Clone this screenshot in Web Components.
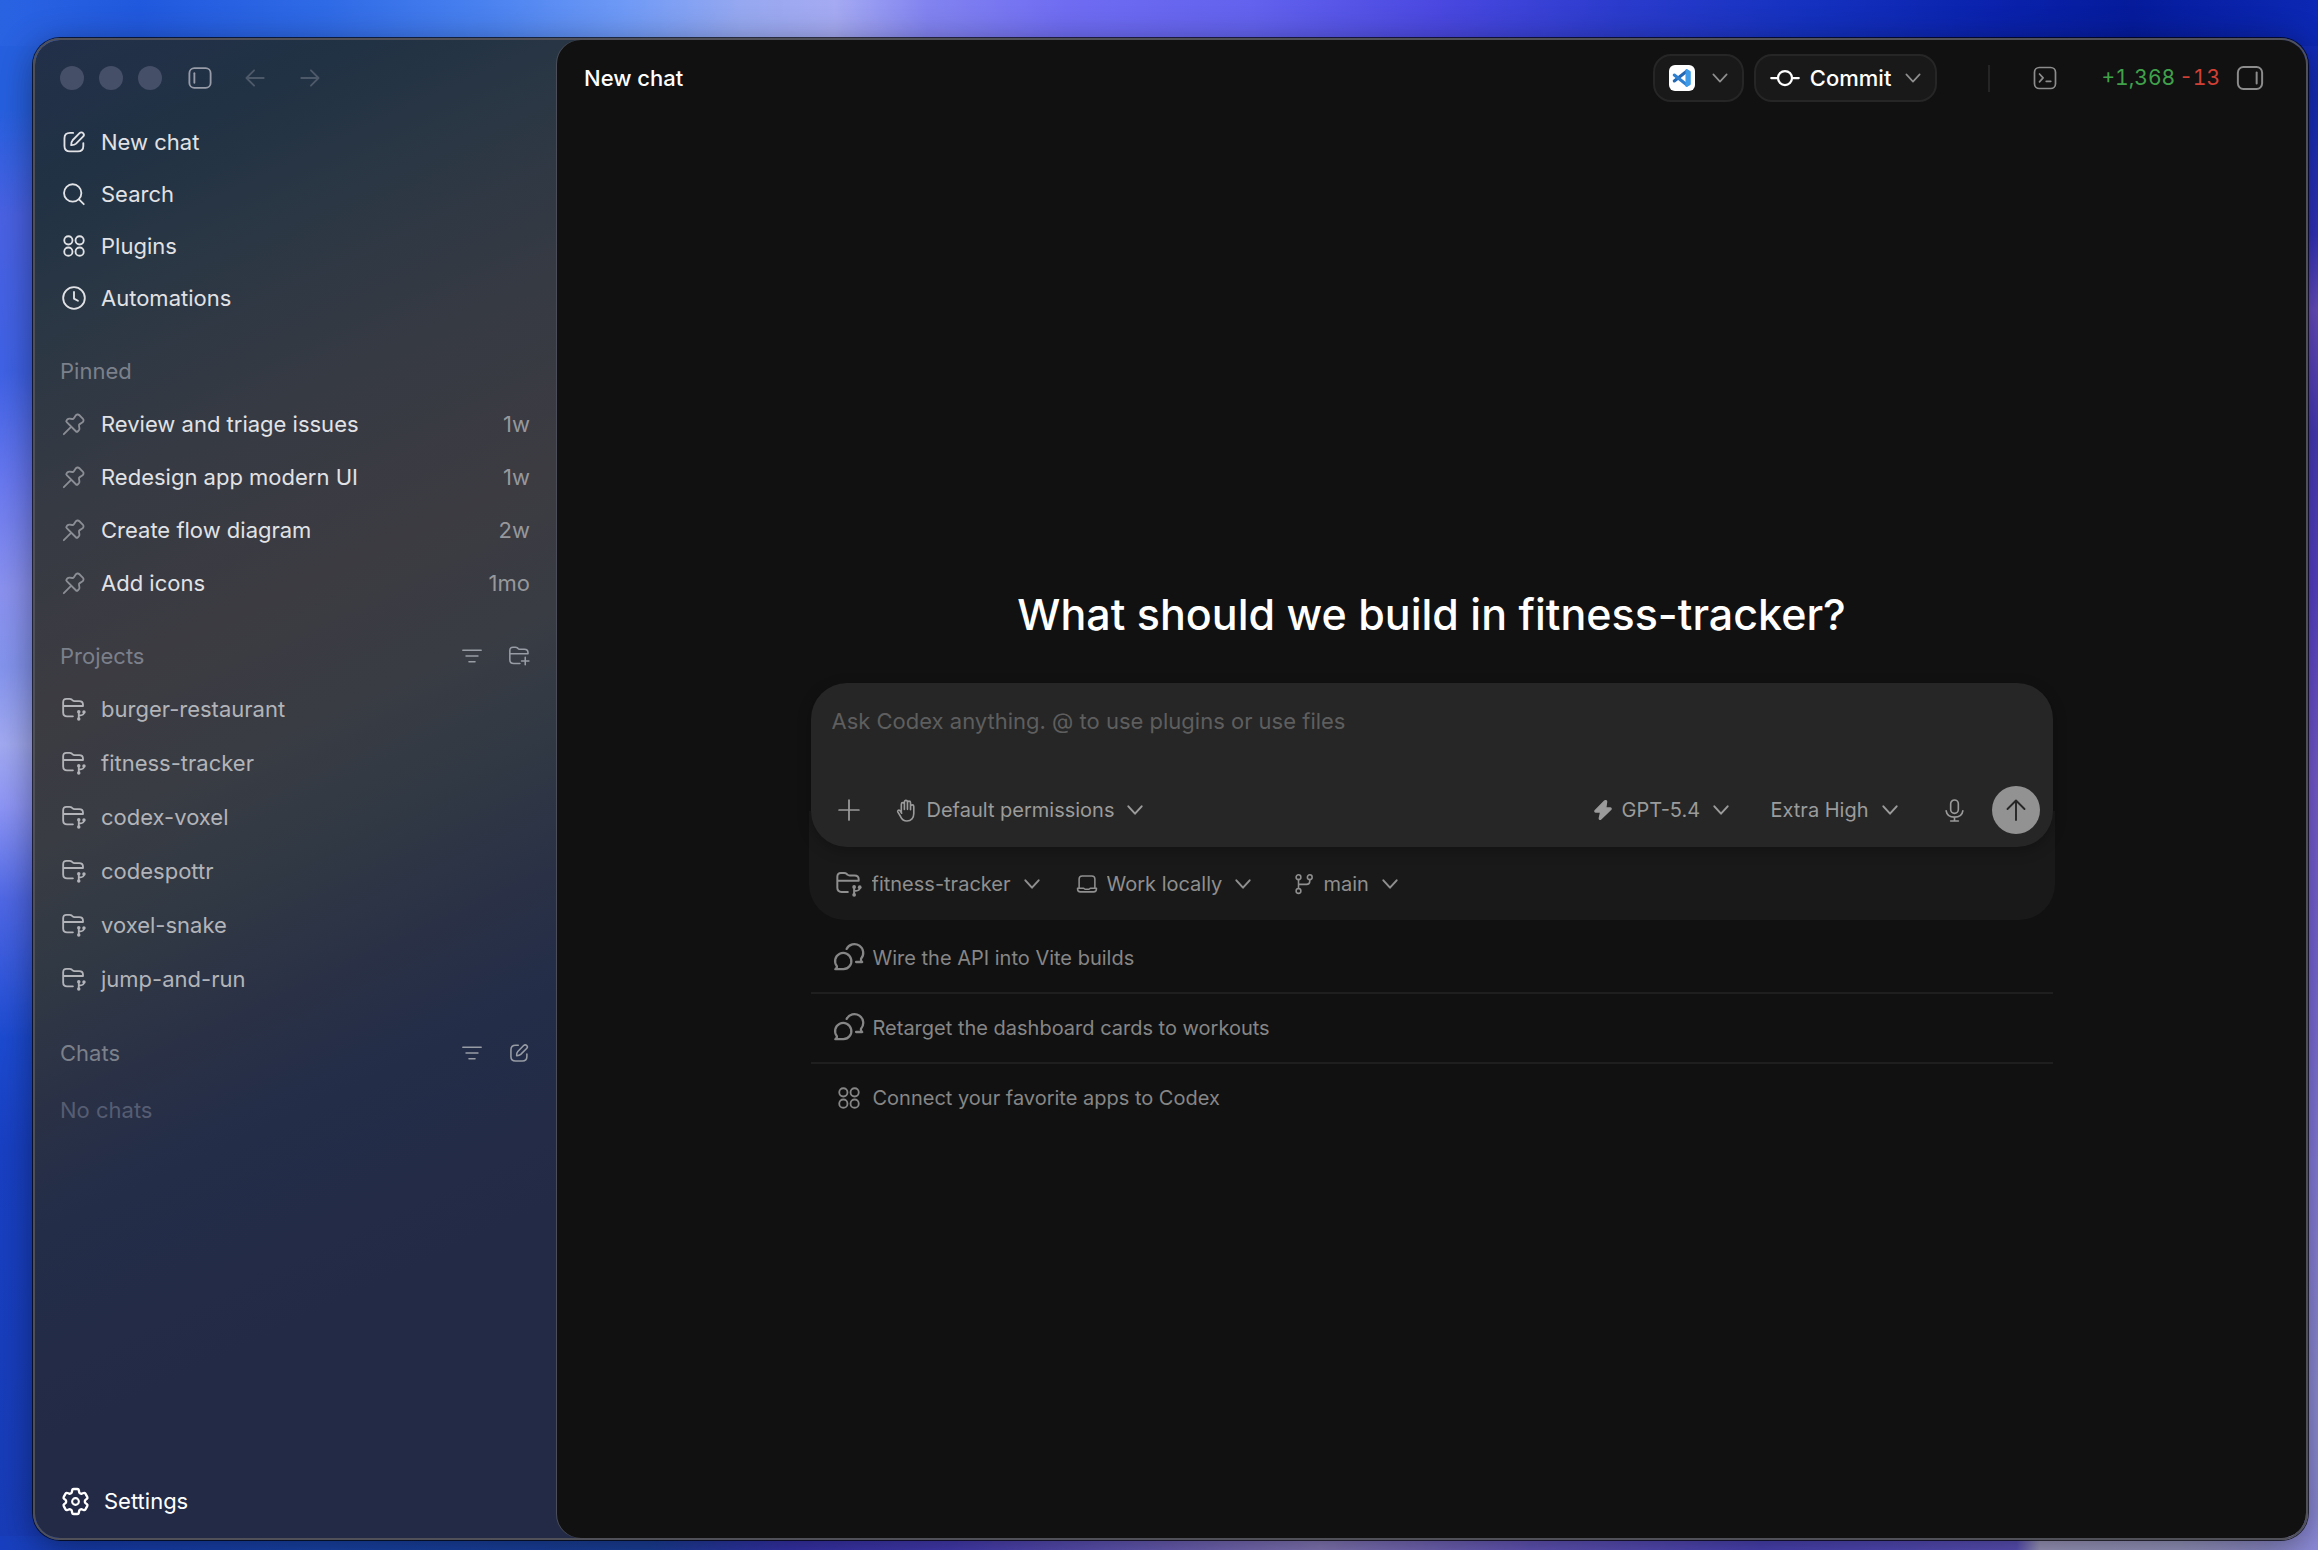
<!DOCTYPE html>
<html lang="en">
<head>
<meta charset="utf-8">
<meta name="viewport" content="width=device-width, initial-scale=1">
<title>New chat</title>
<style>
    html {
        height: 100%;
    }

    body {
        margin: 0;
        min-height: 100vh;
        display: flex;
        box-sizing: border-box;
        padding: 38px 10px 10px 33px;
        font-family: Inter, "Liberation Sans", sans-serif;
        font-size: 22px;
        line-height: 28px;
        color: #e1e2e5;
        /* wallpaper: one strip for each side that shows round the window */
        background:
            linear-gradient(90deg, #2a63e2 0%, #2159de 6%, #2f6ae6 14%, #4a82f0 21%, #6f9af6 27%, #96a8f0 32%, #a5aaf2 36%, #8283f0 40%, #6f6cf2 46%, #6262ee 54%, #4a48e0 62%, #2a3bcc 70%, #1431bf 78%, #0a22ad 86%, #051b9c 92%, #0c28b4 100%) 0 0 / 100% 46px no-repeat,
            linear-gradient(90deg, #183fbf 0%, #1a48b4 14%, #1c43a4 28%, #3a36b8 34%, #4a40c0 41%, #7064c4 50%, #8f82c6 57%, #6a5cc8 66%, #5048c4 76%, #6258c8 87%, #a8a4cc 88%, #a0a0cc 94%, #8e8cdc 100%) 0 100% / 100% 14px no-repeat,
            linear-gradient(180deg, #2660e0 0%, #2660e0 7%, #4a62e4 14%, #3f62e6 24%, #6878f0 31%, #8b92f0 38%, #8494ee 43%, #a2aaf2 48%, #8e96f6 52%, #5068e6 58%, #3358dc 63%, #1c4bd2 67%, #1840c4 74%, #183cb8 100%) 0 0 / 50% 100% no-repeat,
            linear-gradient(180deg, #0c28b4 0%, #1a30c0 8%, #3434c4 15%, #6a50c8 20%, #4a3cc0 28%, #5a44d0 38%, #7a5ed8 50%, #7c6ae0 62%, #8a80e4 75%, #9290dc 90%, #8e8cdc 100%) 100% 0 / 50% 100% no-repeat;
    }
</style>
</head>
<body>

<app-window>
    <side-bar slot="sidebar">
        <nav-item icon="compose">New chat</nav-item>
        <nav-item icon="search">Search</nav-item>
        <nav-item icon="apps">Plugins</nav-item>
        <nav-item icon="clock">Automations</nav-item>

        <nav-section heading="Pinned">
            <nav-item class="pinned" icon="pin" note="1w">Review and triage issues</nav-item>
            <nav-item class="pinned" icon="pin" note="1w">Redesign app modern UI</nav-item>
            <nav-item class="pinned" icon="pin" note="2w">Create flow diagram</nav-item>
            <nav-item class="pinned" icon="pin" note="1mo">Add icons</nav-item>
        </nav-section>

        <nav-section heading="Projects">
            <icon-button slot="actions" icon="filter" label="Filter projects"></icon-button>
            <icon-button slot="actions" icon="folder-plus" label="Add project"></icon-button>
            <nav-item class="project" icon="folder-branch">burger-restaurant</nav-item>
            <nav-item class="project" icon="folder-branch">fitness-tracker</nav-item>
            <nav-item class="project" icon="folder-branch">codex-voxel</nav-item>
            <nav-item class="project" icon="folder-branch">codespottr</nav-item>
            <nav-item class="project" icon="folder-branch">voxel-snake</nav-item>
            <nav-item class="project" icon="folder-branch">jump-and-run</nav-item>
        </nav-section>

        <nav-section heading="Chats">
            <icon-button slot="actions" icon="filter" label="Filter chats"></icon-button>
            <icon-button slot="actions" icon="compose" label="New chat"></icon-button>
            <p class="empty">No chats</p>
        </nav-section>

        <nav-item slot="footer" class="settings" icon="gear">Settings</nav-item>
    </side-bar>

    <chat-header slot="header">New chat</chat-header>
    <chat-home heading="What should we build in fitness-tracker?">
        <chat-composer></chat-composer>
        <suggestion-item icon="chats">Wire the API into Vite builds</suggestion-item>
        <suggestion-item icon="chats">Retarget the dashboard cards to workouts</suggestion-item>
        <suggestion-item icon="apps">Connect your favorite apps to Codex</suggestion-item>
    </chat-home>
</app-window>

<script>
const ICONS = {
    "compose": `
        <path d="M11.2 3.6H8.4C5 3.6 3.2 5.3 3.2 8.5v7.2c0 3.2 1.8 5 5 5h7.4c3.2 0 5-1.8 5-5V13"/>
        <path d="M9.4 14.9c-.1-2 .2-3.3 1.3-4.5l6.4-6.5c1-1 2.4-1 3.3-.1s.9 2.3-.1 3.3l-6.4 6.4c-1.2 1.1-2.5 1.5-4.5 1.4z"/>`,
    "search": `<circle cx="10.8" cy="11" r="8"/><path d="M16.6 17l4.4 4.4"/>`,
    "apps": `
        <circle cx="6.8" cy="6.8" r="3.8"/><circle cx="17.2" cy="6.8" r="3.8"/>
        <circle cx="6.8" cy="17.2" r="3.8"/><circle cx="17.2" cy="17.2" r="3.8"/>`,
    "clock": `<circle cx="12" cy="12" r="10"/><path d="M12 6.5v6.1l3.6 2"/>`,
    "pin": `<path d="M13.4 4.4c.9-1.4 2.5-1.6 3.6-.5l3.1 3.1c1.1 1.1.9 2.7-.5 3.6l-2.3 1.5c-.6.4-.8.9-.7 1.5l.4 2.4c.1.8-.1 1.4-.6 1.9l-.8.8c-.6.6-1.3.6-1.9 0l-8.4-8.4c-.6-.6-.6-1.3 0-1.9l.8-.8c.5-.5 1.1-.7 1.9-.6l2.4.4c.6.1 1.1-.1 1.5-.7zM9.3 14.7l-6.7 6.7"/>`,
    "folder-branch": `
        <path d="M11 18.8H5.6C3.3 18.8 2 17.5 2 15.3V5.8c0-2 1.1-3.2 3-3.2h2.9c.8 0 1.4.2 2 .7l.8.7c.5.5 1.1.7 1.8.7h4.3c2.3 0 3.5 1.2 3.5 3.3v1.2H2"/>
        <path d="M16.4 14.8v6M21.2 15.3c0 2-1 2.6-4.6 2.7"/>
        <g fill="currentColor" stroke="none"><circle cx="16.4" cy="14.5" r="1.6"/><circle cx="21.2" cy="14.7" r="1.6"/><circle cx="16.4" cy="21.3" r="1.6"/></g>`,
    "folder-plus": `
        <path d="M13 20.2H6.3c-2.7 0-4.3-1.5-4.3-4.1V5.9C2 3.7 3.3 2.4 5.5 2.4h2.6c.9 0 1.6.3 2.2.8l.8.7c.6.5 1.2.8 2 .8h4.7c2.5 0 4 1.3 4 3.7v1.2H2M18.8 13.5v8M14.8 17.5h8"/>`,
    "filter": `<path d="M2 5.8h20M5.5 12h13M8.7 18.2h6.6"/>`,
    "gear": `
        <path d="M9.594 3.94c.09-.542.56-.94 1.11-.94h2.593c.55 0 1.02.398 1.11.94l.213 1.281c.063.374.313.686.645.87.074.04.147.083.22.127.325.196.72.257 1.075.124l1.217-.456a1.125 1.125 0 0 1 1.37.49l1.296 2.247a1.125 1.125 0 0 1-.26 1.431l-1.003.827c-.293.241-.438.613-.43.992a7.723 7.723 0 0 1 0 .255c-.008.378.137.75.43.991l1.004.827c.424.35.534.955.26 1.43l-1.298 2.247a1.125 1.125 0 0 1-1.369.491l-1.217-.456c-.355-.133-.75-.072-1.076.124a6.47 6.47 0 0 1-.22.128c-.331.183-.581.495-.644.869l-.213 1.281c-.09.543-.56.94-1.11.94h-2.594c-.55 0-1.019-.398-1.11-.94l-.213-1.281c-.062-.374-.312-.686-.644-.87a6.52 6.52 0 0 1-.22-.127c-.325-.196-.72-.257-1.076-.124l-1.217.456a1.125 1.125 0 0 1-1.369-.49l-1.297-2.247a1.125 1.125 0 0 1 .26-1.431l1.004-.827c.292-.24.437-.613.43-.991a6.932 6.932 0 0 1 0-.255c.007-.38-.138-.751-.43-.992l-1.004-.827a1.125 1.125 0 0 1-.26-1.43l1.297-2.247a1.125 1.125 0 0 1 1.37-.491l1.216.456c.356.133.751.072 1.076-.124.072-.044.146-.086.22-.128.332-.183.582-.495.644-.869l.214-1.28z" transform="translate(-1.8 -1.8) scale(1.15)"/>
        <circle cx="12" cy="12" r="2.8"/>`,
    "panel-left": `<rect x="2.2" y="2.9" width="19.6" height="18.2" rx="4.6"/><path d="M6.8 7.6v8.8"/>`,
    "panel-right": `<rect x="1.6" y="2.6" width="20.8" height="18.8" rx="4.8"/><path d="M17.7 7.2v9.6"/>`,
    "arrow-left": `<path d="M21.5 12H3M11 3.6L2.7 12l8.3 8.4"/>`,
    "arrow-right": `<path d="M2.5 12H21M13 3.6l8.3 8.4-8.3 8.4"/>`,
    "arrow-up": `<path d="M12 22V2.5M3.5 11L12 2.5l8.5 8.5"/>`,
    "chevron": `<path d="M2 6.5l10 11 10-11"/>`,
    "commit": `<circle cx="12" cy="12" r="5.6"/><path d="M1 12h5.4M17.6 12H23"/>`,
    "terminal": `<rect x="1.5" y="1.5" width="21" height="21" rx="4.8"/><path d="M6.5 8l3.6 3.9-3.6 3.9M13.2 15.3h4.6"/>`,
    "plus": `<path d="M12 1.2v21.6M1.2 12h21.6"/>`,
    "hand": `<path d="M6.6 13.5V5.4a1.6 1.6 0 0 1 3.2 0V11M9.8 10.5V3a1.6 1.6 0 0 1 3.2 0v7.5M13 10.8V3.8a1.6 1.6 0 0 1 3.2 0v7.4M16.2 7.8a1.7 1.7 0 0 1 3.4 0v7.4c0 4.7-2.7 7.7-7.2 7.7-3.3 0-5.2-1.6-6.6-4.6L2.9 13.5c-.6-1.4.9-2.6 2.2-1.5l1.9 2.8"/>`,
    "bolt": `<path d="M13.9 1.2L2.7 12.6c-.8.8-.4 1.9.7 1.9h5.8l-1.6 7.4c-.2 1.2 1 1.7 1.8.9L21.3 11.4c.8-.8.4-1.9-.7-1.9h-5.3l1-7.4c.2-1.2-1.5-1.8-2.4-.9z" fill="currentColor"/>`,
    "mic": `<rect x="8" y="1" width="8" height="14" rx="4"/><path d="M3.3 12.3c.6 4 3.9 6.6 8.7 6.6s8.1-2.6 8.7-6.6M12 19v3.8M8 22.9h8"/>`,
    "laptop": `
        <path d="M3.4 16.3V6.6c0-2.2 1.2-3.4 3.4-3.4h10.4c2.2 0 3.4 1.2 3.4 3.4v9.7"/>
        <path d="M1.7 16.6h6.5c.8 0 1 1.1 1.9 1.1h3.8c.9 0 1.1-1.1 1.9-1.1h6.5v.8c0 2.2-1 3.2-3.1 3.2H4.8c-2.1 0-3.1-1-3.1-3.2z"/>`,
    "branch": `
        <circle cx="6" cy="4.6" r="2.6"/><circle cx="18.3" cy="4.6" r="2.6"/><circle cx="6" cy="19.6" r="2.6"/>
        <path d="M6 7.2V17M18.3 7.2v1.7c0 2.5-1.2 3.5-3.6 3.5H6"/>`,
    "chats": `
        <path d="M2.9 18.1A6.1 6.1 0 1 1 7.8 20.4H1.7c1.2-.6 1.4-1.3 1.2-2.3z"/>
        <path d="M10.2 5.2A6.6 6.6 0 1 1 21 12.6c-.3.9 0 1.6.9 2.4h-4.6"/>`,
    "vscode": `
        <rect width="24" height="24" rx="5.5" fill="#fff" stroke="none"/>
        <path d="M4.9 14.7L16.6 5.6" stroke="#2468b4" stroke-width="2.9"/>
        <path d="M4.9 9.3l11.7 9.1" stroke="#2f7fd0" stroke-width="2.9"/>
        <path d="M15.2 4.3c.3-.5.9-.6 1.4-.4l2.7 1.3c.5.2.8.7.8 1.2v11.2c0 .5-.3 1-.8 1.2l-2.7 1.3c-.5.2-1.1.1-1.4-.4z" fill="#3d9ae8" stroke="none"/>`,
};

class UiIcon extends HTMLElement {
    constructor() {
        super();
        this.attachShadow({ mode: "open" });
    }

    connectedCallback() {
        const name = this.getAttribute("name");
        this.shadowRoot.innerHTML = `
            <style>
                :host {
                    display: block;
                    flex: none;
                    width: var(--icon-size, 26px);
                    height: var(--icon-size, 26px);
                }

                svg {
                    display: block;
                    width: 100%;
                    height: 100%;
                    overflow: visible;
                }
            </style>
            <svg viewBox="0 0 24 24" fill="none" stroke="currentColor" stroke-width="${this.getAttribute("weight") || 1.7}" stroke-linecap="round" stroke-linejoin="round" aria-hidden="true">${ICONS[name] || ""}</svg>
        `;
    }
}

customElements.define("ui-icon", UiIcon);

class IconButton extends HTMLElement {
    constructor() {
        super();
        this.attachShadow({ mode: "open" });
    }

    connectedCallback() {
        this.shadowRoot.innerHTML = `
            <style>
                :host {
                    display: block;
                    flex: none;
                }

                button {
                    display: block;
                    padding: 0;
                    border: none;
                    background: none;
                    color: inherit;
                    cursor: pointer;
                }
            </style>
            <button type="button" aria-label="${this.getAttribute("label")}">
                <ui-icon name="${this.getAttribute("icon")}" weight="${this.getAttribute("weight") || 1.7}"></ui-icon>
            </button>
        `;
    }
}

customElements.define("icon-button", IconButton);

const appWindowTemplate = document.createElement("template");
appWindowTemplate.innerHTML = `
<style>
    :host {
        flex: 1;
        min-width: 0;
        display: flex;
        overflow: hidden;
        border: 2px solid #505158;
        border-radius: 27px;
        background: linear-gradient(155deg, #222f49 0%, #213244 9%, #2b3744 17%, #363a43 27%, #3c3b42 38%, #393c43 46%, #313944 53%, #2a3146 61%, #232d48 68%, #232a46 80%, #232a45 100%) 0 0 / 560px 100% no-repeat padding-box;
        box-shadow: 0 0 0 1px rgba(0, 0, 0, 0.7), 0 8px 36px rgba(0, 0, 0, 0.45);
    }

    aside {
        flex: none;
        width: 522px;
        display: flex;
    }

    main {
        flex: 1;
        min-width: 0;
        display: flex;
        flex-direction: column;
        background: #111;
        border-radius: 24px 0 0 24px;
        box-shadow: -1px 0 0 #4b4e59;
    }
</style>

<aside><slot name="sidebar"></slot></aside>
<main>
    <slot name="header"></slot>
    <slot></slot>
</main>
`;

class AppWindow extends HTMLElement {
    constructor() {
        super();
        this.attachShadow({ mode: "open" }).appendChild(appWindowTemplate.content.cloneNode(true));
    }
}

customElements.define("app-window", AppWindow);

const sideBarTemplate = document.createElement("template");
sideBarTemplate.innerHTML = `
<style>
    :host {
        flex: 1;
        display: flex;
        flex-direction: column;
        box-sizing: border-box;
        padding: 0 27px 11px 25px;
    }

    .titlebar {
        display: flex;
        align-items: center;
        height: 76px;
    }

    .light {
        width: 24px;
        height: 24px;
        margin-right: 15px;
        border-radius: 50%;
        background: #454f67;
    }

    .titlebar icon-button {
        color: #979ca8;
        margin: 0 31px 0 10px;
    }

    .history {
        display: flex;
        gap: 33px;
        --icon-size: 22px;
    }

    .history icon-button {
        color: #4d5868;
        margin: 0;
    }

    nav {
        flex: 1;
    }
</style>

<div class="titlebar">
    <span class="light"></span>
    <span class="light"></span>
    <span class="light"></span>
    <icon-button icon="panel-left" label="Toggle sidebar"></icon-button>
    <div class="history">
        <icon-button icon="arrow-left" label="Back" weight="2"></icon-button>
        <icon-button icon="arrow-right" label="Forward" weight="2"></icon-button>
    </div>
</div>
<nav><slot></slot></nav>
<slot name="footer"></slot>
`;

class SideBar extends HTMLElement {
    constructor() {
        super();
        this.attachShadow({ mode: "open" }).appendChild(sideBarTemplate.content.cloneNode(true));
    }
}

customElements.define("side-bar", SideBar);

class NavItem extends HTMLElement {
    constructor() {
        super();
        this.attachShadow({ mode: "open" });
    }

    connectedCallback() {
        const note = this.getAttribute("note");
        this.shadowRoot.innerHTML = `
            <style>
                :host {
                    display: block;
                    --row: 52px;
                }

                :host(.pinned) {
                    --row: 53px;
                    --icon-color: #8c8e95;
                }

                :host(.project) {
                    --row: 54px;
                    color: #b2b4b9;
                }

                :host(.settings) {
                    --icon-size: 29px;
                    color: #fff;
                }

                a {
                    display: flex;
                    align-items: center;
                    gap: 14px;
                    height: var(--row);
                    padding-left: 1px;
                    color: inherit;
                    text-decoration: none;
                }

                ui-icon {
                    color: var(--icon-color, inherit);
                }

                .label {
                    flex: 1;
                    min-width: 0;
                    white-space: nowrap;
                }

                .note {
                    color: #96989c;
                }
            </style>
            <a href="#">
                <ui-icon name="${this.getAttribute("icon")}"></ui-icon>
                <span class="label"><slot></slot></span>
                ${note ? `<span class="note">${note}</span>` : ""}
            </a>
        `;
    }
}

customElements.define("nav-item", NavItem);

class NavSection extends HTMLElement {
    constructor() {
        super();
        this.attachShadow({ mode: "open" });
    }

    connectedCallback() {
        this.shadowRoot.innerHTML = `
            <style>
                :host {
                    display: block;
                    margin-top: 21px;
                }

                header {
                    display: flex;
                    align-items: center;
                    justify-content: space-between;
                    height: 52px;
                    color: #7c808a;
                }

                h2 {
                    margin: 0;
                    font: inherit;
                }

                .actions {
                    display: flex;
                    gap: 25px;
                    color: #989ca4;
                    --icon-size: 22px;
                }

                ::slotted(.empty) {
                    margin: 0;
                    line-height: 62px;
                    color: #565d72;
                }
            </style>
            <header>
                <h2>${this.getAttribute("heading")}</h2>
                <div class="actions"><slot name="actions"></slot></div>
            </header>
            <div class="items"><slot></slot></div>
        `;
    }
}

customElements.define("nav-section", NavSection);

const chatHeaderTemplate = document.createElement("template");
chatHeaderTemplate.innerHTML = `
<style>
    :host {
        display: flex;
        align-items: center;
        height: 76px;
        padding: 0 42px 0 27px;
        color: #fff;
    }

    h1 {
        flex: 1;
        margin: 0;
        font-size: inherit;
        font-weight: 500;
    }

    .pill {
        display: flex;
        align-items: center;
        box-sizing: border-box;
        height: 48px;
        margin-right: 10px;
        padding: 0 14px;
        border: 2px solid #262626;
        border-radius: 18px;
        background: #191919;
        color: inherit;
        font: inherit;
        font-weight: 500;
        cursor: pointer;
    }

    .chevron {
        --icon-size: 16px;
        margin-left: 14px;
        color: #8e8e8e;
    }

    .editor {
        margin-right: 3px;
    }

    .commit {
        --icon-size: 30px;
        margin-right: 10px;
    }

    .divider {
        width: 2px;
        height: 27px;
        margin: 0 43px 0 41px;
        background: #252525;
    }

    icon-button {
        color: #8c8c8c;
    }

    .terminal {
        --icon-size: 24px;
        margin-right: 44px;
    }

    .panel {
        --icon-size: 28px;
        margin-left: 16px;
    }

    .added,
    .removed {
        font-size: 21px;
        font-variant-numeric: tabular-nums;
    }

    .added {
        color: #40a14b;
        margin-right: 4px;
    }

    .removed {
        color: #d04035;
    }
</style>

<h1><slot></slot></h1>
<button class="pill" type="button" aria-label="Open in editor">
    <ui-icon class="editor" name="vscode"></ui-icon>
    <ui-icon class="chevron" name="chevron" weight="2.5"></ui-icon>
</button>
<button class="pill" type="button">
    <ui-icon class="commit" name="commit" weight="1.8"></ui-icon>
    Commit
    <ui-icon class="chevron" name="chevron" weight="2.5"></ui-icon>
</button>
<span class="divider"></span>
<icon-button class="terminal" icon="terminal" label="Toggle terminal"></icon-button>
<span class="added">+1,368</span>
<span class="removed">-13</span>
<icon-button class="panel" icon="panel-right" label="Toggle review panel"></icon-button>
`;

class ChatHeader extends HTMLElement {
    constructor() {
        super();
        this.attachShadow({ mode: "open" }).appendChild(chatHeaderTemplate.content.cloneNode(true));
    }
}

customElements.define("chat-header", ChatHeader);

class ChatHome extends HTMLElement {
    constructor() {
        super();
        this.attachShadow({ mode: "open" });
    }

    connectedCallback() {
        this.shadowRoot.innerHTML = `
            <style>
                :host {
                    flex: 1;
                    display: flex;
                    flex-direction: column;
                    align-items: center;
                    justify-content: center;
                    padding: 62px 24px 0;
                    font-size: 20px;
                }

                .column {
                    width: 100%;
                    max-width: 1246px;
                }

                h2 {
                    margin: 0 0 39px;
                    font-size: 43px;
                    font-weight: 500;
                    line-height: 60px;
                    text-align: center;
                    color: #fff;
                }
            </style>
            <div class="column">
                <h2>${this.getAttribute("heading")}</h2>
                <slot></slot>
            </div>
        `;
    }
}

customElements.define("chat-home", ChatHome);

class PickerField extends HTMLElement {
    constructor() {
        super();
        this.attachShadow({ mode: "open" });
    }

    connectedCallback() {
        const icon = this.getAttribute("icon");
        this.shadowRoot.innerHTML = `
            <style>
                :host {
                    display: flex;
                    align-items: center;
                    flex: none;
                }

                label {
                    margin-right: 9px;
                }

                select {
                    appearance: none;
                    margin: 0;
                    padding: 0 28px 0 0;
                    border: none;
                    background: none;
                    color: inherit;
                    font: inherit;
                    cursor: pointer;
                }

                option {
                    background: #262626;
                }

                .chevron {
                    --icon-size: 16px;
                    margin-left: -16px;
                    pointer-events: none;
                }
            </style>
            ${icon ? `<label for="picker"><ui-icon name="${icon}"></ui-icon></label>` : ""}
            <select id="picker" aria-label="${this.getAttribute("label")}">
                <option>${this.getAttribute("value")}</option>
            </select>
            <ui-icon class="chevron" name="chevron" weight="3"></ui-icon>
        `;
    }
}

customElements.define("picker-field", PickerField);

const composerTemplate = document.createElement("template");
composerTemplate.innerHTML = `
<style>
    :host {
        display: block;
        color: #9b9b9b;
    }

    form {
        position: relative;
        margin: 0 2px;
        padding: 24px 13px 13px 21px;
        border-radius: 36px;
        background: #262626;
        box-shadow: 0 4px 14px rgba(0, 0, 0, 0.25);
    }

    textarea {
        display: block;
        box-sizing: border-box;
        width: 100%;
        height: 79px;
        padding: 0;
        border: none;
        outline: none;
        resize: none;
        background: none;
        color: #fff;
        font: inherit;
        font-size: 22px;
    }

    textarea::placeholder {
        color: #5e5e5e;
    }

    .toolbar {
        display: flex;
        align-items: center;
        padding-left: 6px;
    }

    .plus {
        --icon-size: 22px;
        margin-right: 35px;
    }

    .permissions {
        --icon-size: 23px;
    }

    .model {
        --icon-size: 20px;
        margin-left: auto;
        margin-right: 42px;
    }

    .mic {
        --icon-size: 23px;
        margin: 0 26px 0 45px;
    }

    .send {
        --icon-size: 24px;
        display: grid;
        place-items: center;
        width: 48px;
        height: 48px;
        padding: 0;
        border: none;
        border-radius: 50%;
        background: #929292;
        color: #262626;
        cursor: pointer;
    }

    .tray {
        display: flex;
        align-items: center;
        gap: 36px;
        height: 73px;
        margin-top: -36px;
        padding: 36px 26px 0;
        border-radius: 0 0 36px 36px;
        background: #191919;
        color: #8f8f8f;
    }

    .project {
        --icon-size: 28px;
    }

    .place {
        --icon-size: 22px;
    }

    .branch {
        --icon-size: 22px;
        margin-left: 6px;
    }
</style>

<form>
    <textarea aria-label="Message" placeholder="Ask Codex anything. @ to use plugins or use files"></textarea>
    <div class="toolbar">
        <icon-button class="plus" icon="plus" label="Add files" weight="1.9"></icon-button>
        <picker-field class="permissions" icon="hand" label="Permissions" value="Default permissions"></picker-field>
        <picker-field class="model" icon="bolt" label="Model" value="GPT-5.4"></picker-field>
        <picker-field label="Reasoning" value="Extra High"></picker-field>
        <icon-button class="mic" icon="mic" label="Dictate"></icon-button>
        <button class="send" type="button" aria-label="Send">
            <ui-icon name="arrow-up" weight="1.9"></ui-icon>
        </button>
    </div>
</form>
<div class="tray">
    <picker-field class="project" icon="folder-branch" label="Project" value="fitness-tracker"></picker-field>
    <picker-field class="place" icon="laptop" label="Run location" value="Work locally"></picker-field>
    <picker-field class="branch" icon="branch" label="Branch" value="main"></picker-field>
</div>
`;

class ChatComposer extends HTMLElement {
    constructor() {
        super();
        this.attachShadow({ mode: "open" }).appendChild(composerTemplate.content.cloneNode(true));
    }
}

customElements.define("chat-composer", ChatComposer);

class SuggestionItem extends HTMLElement {
    constructor() {
        super();
        this.attachShadow({ mode: "open" });
    }

    connectedCallback() {
        const icon = this.getAttribute("icon");
        this.shadowRoot.innerHTML = `
            <style>
                :host {
                    display: block;
                    margin: 0 2px;
                    border-bottom: 2px solid #1f1f1f;
                    color: #868686;
                }

                :host(:first-of-type) {
                    margin-top: 4px;
                }

                :host(:last-of-type) {
                    border-bottom: none;
                }

                button {
                    display: flex;
                    align-items: center;
                    width: 100%;
                    height: 68px;
                    padding: 0 22px;
                    border: none;
                    background: none;
                    color: inherit;
                    font: inherit;
                    cursor: pointer;
                }

                .icon {
                    display: grid;
                    place-items: center;
                    width: 32px;
                    height: 32px;
                    margin-right: 8px;
                    --icon-size: ${icon === "chats" ? 32 : 26}px;
                }
            </style>
            <button type="button">
                <span class="icon"><ui-icon name="${icon}"></ui-icon></span>
                <slot></slot>
            </button>
        `;
    }
}

customElements.define("suggestion-item", SuggestionItem);
</script>
</body>
</html>
